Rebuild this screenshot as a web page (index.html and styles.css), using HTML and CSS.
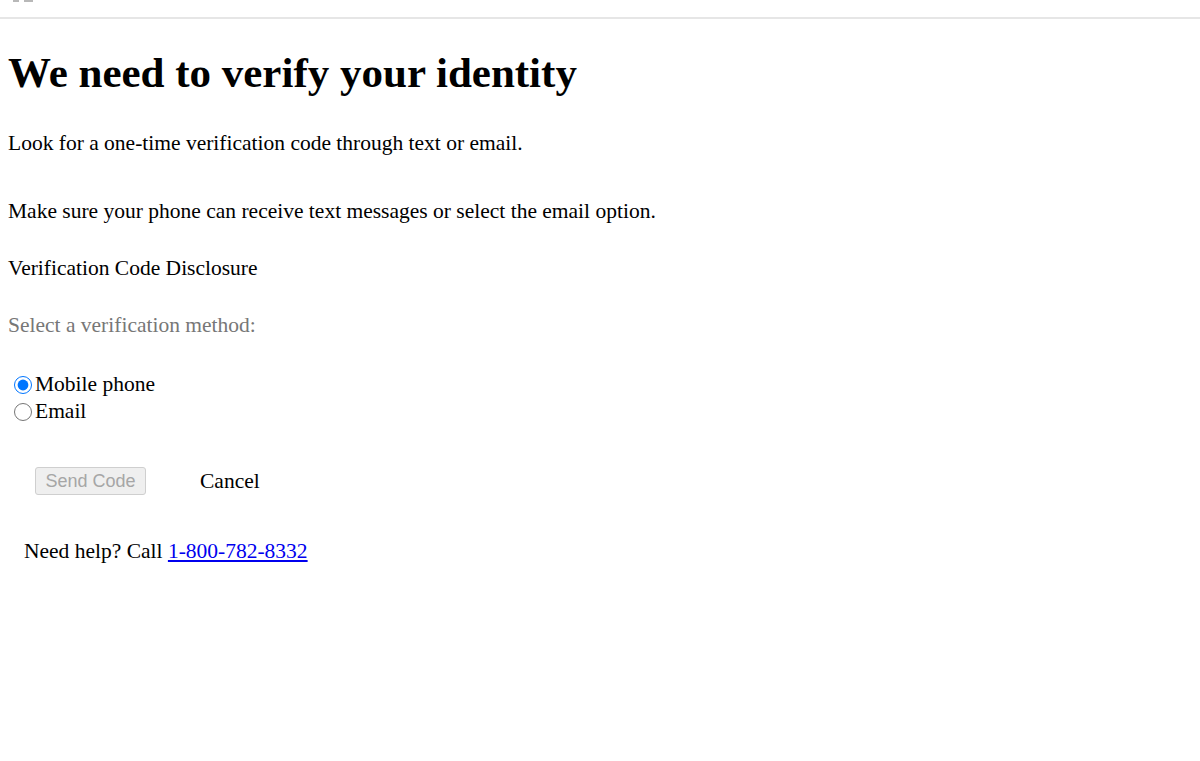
FILE: index.html
```html
<!DOCTYPE html>
<html lang="en">
<head>
    <meta charset="UTF-8">
    <title>Verify your identity</title>
    <link rel="stylesheet" href="styles.css">
</head>
<body>
    <div class="top-bar">
        <span class="top-mark"></span>
        <span class="top-mark wide"></span>
    </div>

    <div class="page">
        <h1>We need to verify your identity</h1>
        <p class="intro">Look for a one-time verification code through text or email.</p>
        <p class="intro second">Make sure your phone can receive text messages or select the email option.</p>
        <p class="disclosure">Verification Code Disclosure</p>
        <p class="method-label">Select a verification method:</p>

        <div class="methods">
            <label class="method"><input type="radio" name="method" checked>Mobile phone</label>
            <label class="method"><input type="radio" name="method">Email</label>
        </div>

        <div class="actions">
            <button class="send-btn" disabled>Send Code</button>
            <span class="cancel">Cancel</span>
        </div>

        <p class="help">Need help? Call <a href="#">1-800-782-8332</a></p>
    </div>
</body>
</html>
```

FILE: styles.css
```css
* {
    box-sizing: border-box;
}

body {
    margin: 0;
    background: #fff;
    color: #000;
    font-family: 'Liberation Serif', 'Times New Roman', serif;
    font-size: 21.5px;
}

.top-bar {
    height: 19px;
    border-bottom: 2px solid #e6e6e6;
    display: flex;
    align-items: flex-start;
    gap: 5px;
    padding-left: 13px;
}

.top-mark {
    width: 6px;
    height: 2px;
    background: #b8b8b8;
}

.top-mark.wide {
    width: 9px;
}

.page {
    padding: 0 8px;
}

h1 {
    font-size: 43px;
    font-weight: bold;
    margin: 29px 0 0;
}

p {
    margin: 0;
}

.intro {
    margin-top: 34px;
}

.intro.second {
    margin-top: 43px;
}

.disclosure {
    margin-top: 32px;
}

.method-label {
    margin-top: 32px;
    color: #777;
}

.methods {
    margin-top: 33px;
    display: flex;
    flex-direction: column;
}

.method {
    display: flex;
    align-items: center;
    height: 27px;
}

.method input {
    width: 18px;
    height: 18px;
    margin: 0 3px 0 6px;
}

.actions {
    margin-top: 42px;
    display: flex;
    align-items: center;
    padding-left: 27px;
}

.send-btn {
    width: 111px;
    height: 28px;
    font-family: 'Liberation Sans', Arial, sans-serif;
    font-size: 18px;
    color: #a6a6a6;
    background: #efefef;
    border: 1px solid #cfcfcf;
    border-radius: 3px;
    padding: 0;
}

.cancel {
    margin-left: 54px;
}

.help {
    margin-top: 44px;
    padding-left: 16px;
}

.help a {
    color: #0000ee;
}
```
